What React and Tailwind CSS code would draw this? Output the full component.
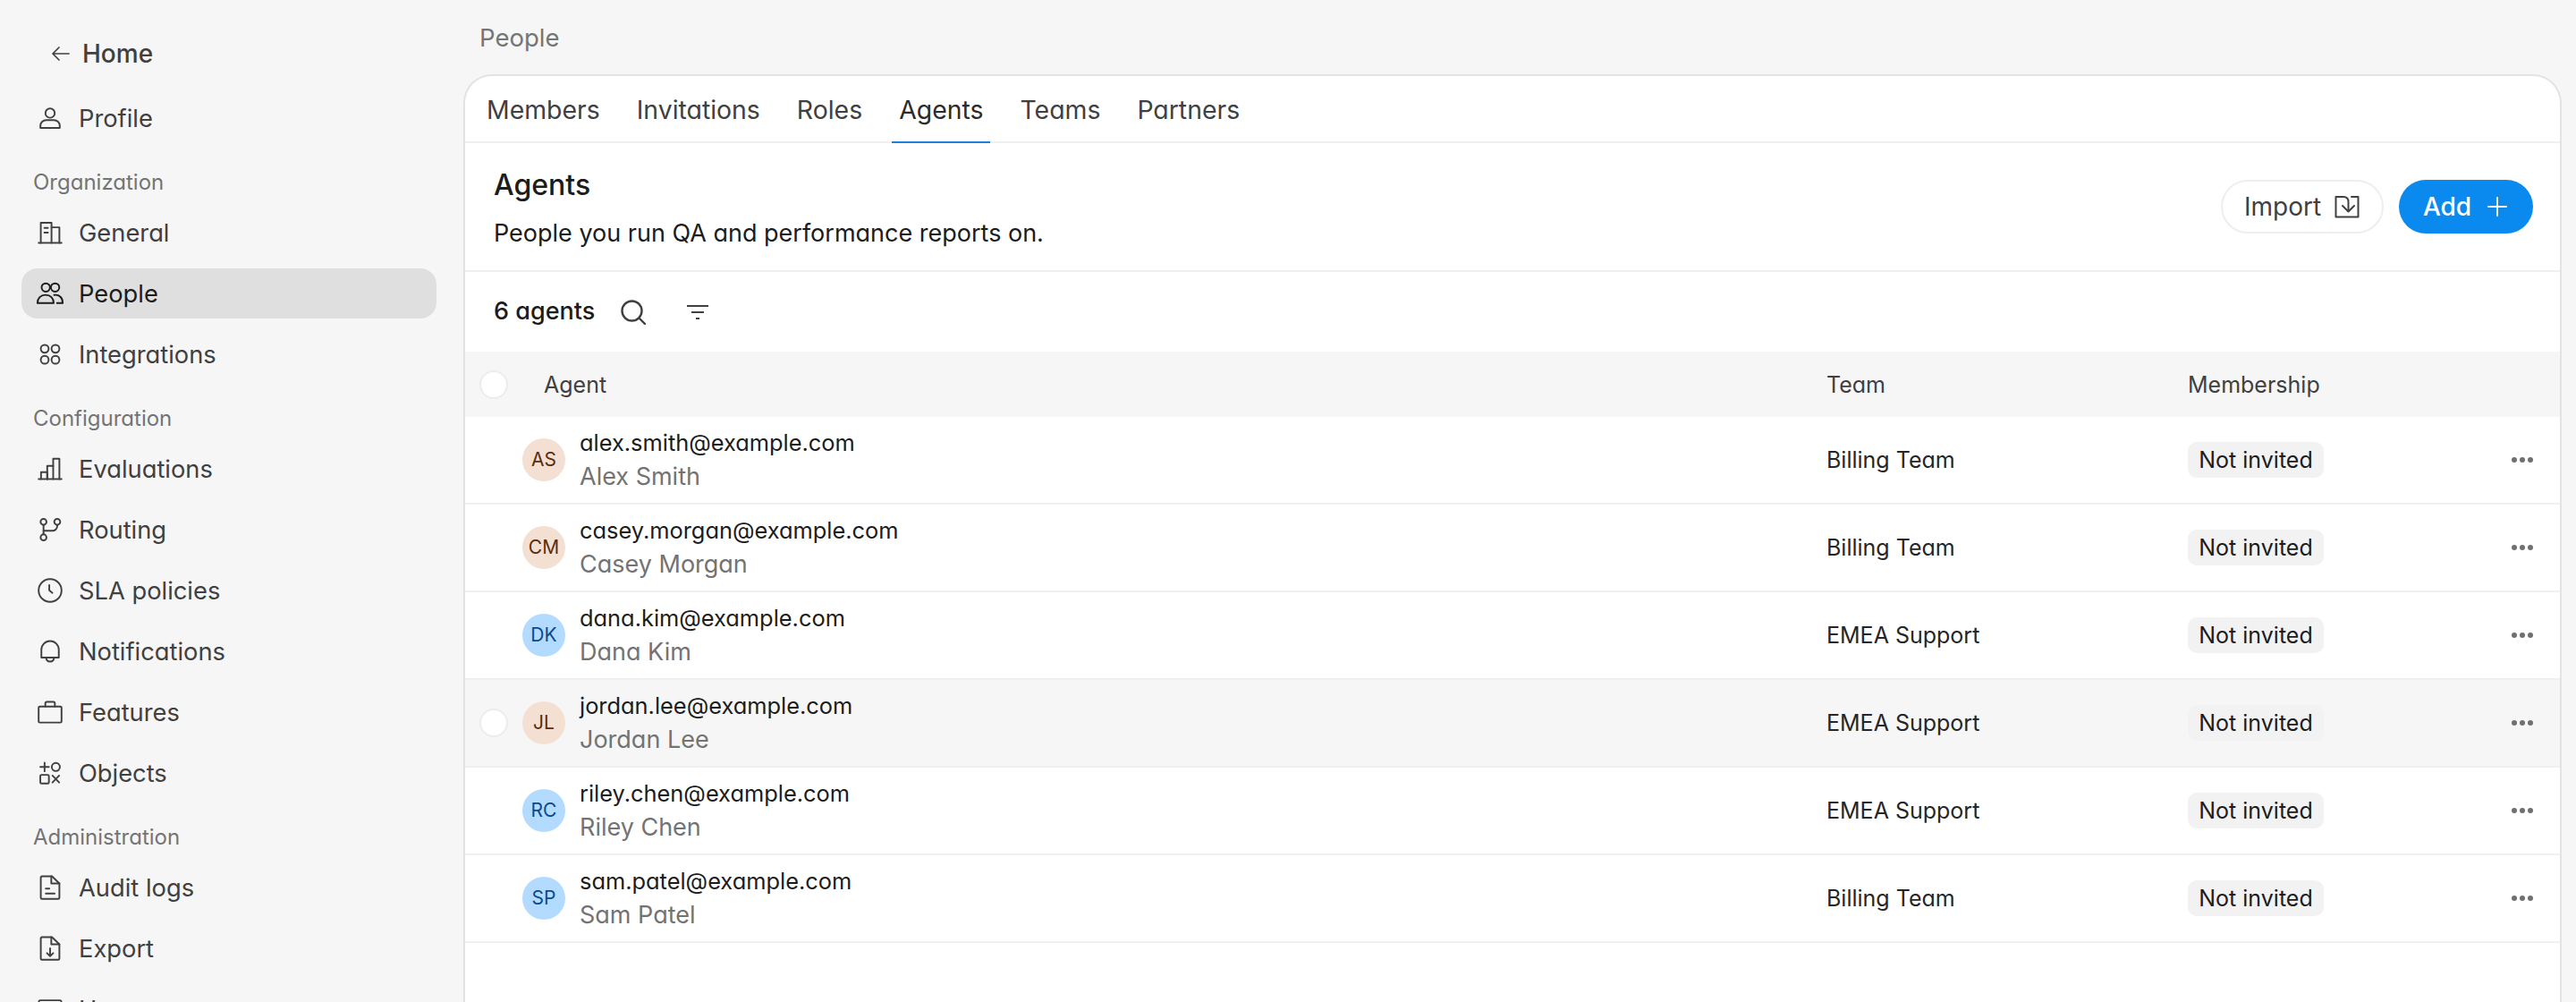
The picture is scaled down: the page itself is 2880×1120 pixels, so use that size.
import React from "react";

const S = ({ children, size = 32, w = 1.45, vb = 24 }) => (
  <svg width={size} height={size} viewBox={`0 0 ${vb} ${vb}`} fill="none" stroke="currentColor" strokeWidth={w} strokeLinecap="round" strokeLinejoin="round" className="shrink-0">{children}</svg>
);

const icons = {
  profile: <S><circle cx="12" cy="7.8" r="3.9" /><path d="M3.9 20.2v-1.8c0-2.7 2.2-4.7 4.9-4.7h6.4c2.7 0 4.9 2 4.9 4.7v1.800z" /></S>,
  general: <S><path d="M1.8 20.6h20.4" strokeLinecap="butt" /><path d="M4.2 20.6V3.8h9v16.8" /><path d="M13.2 7.6h6.6v13" /><path d="M7.2 8h3M7.2 12h3" /></S>,
  people: <S><circle cx="8.4" cy="7" r="3.5" /><circle cx="16.2" cy="7" r="3.5" /><path d="M1.4 20c0-4 2.8-6.8 6.8-6.8s6.800 2.800 6.800 6.800z" /><path d="M15.4 13.300c4.400-.6 7.200 2.400 7.200 6.700h-4.800" /></S>,
  integrations: <S><circle cx="7.5" cy="7.4" r="3.3" /><circle cx="16.5" cy="7.4" r="3.3" /><circle cx="7.5" cy="16.6" r="3.3" /><circle cx="16.5" cy="16.6" r="3.3" /></S>,
  evaluations: <S><path d="M1.8 20.6h20.4" strokeLinecap="butt" /><path d="M4.4 20.6v-5.8h5.2v5.8" /><path d="M9.6 20.6V9.6h5v11" /><path d="M14.6 9.6V3.6h5.2v17" /></S>,
  routing: <S><circle cx="6.5" cy="5.5" r="2.5" /><circle cx="18" cy="5.5" r="2.5" /><circle cx="6.5" cy="18.5" r="2.5" /><path d="M6.5 8v8" /><path d="M6.5 13h7.500a4 4 0 0 0 4-4V8" /></S>,
  sla: <S><circle cx="12" cy="12" r="9.6" /><path d="M11.3 7.5v4.3l2.6 2.2" /></S>,
  notifications: <S><path d="M4.7 17.3v-6.6a7.3 7.3 0 0 1 14.6 0v6.6z" /><path d="M8.6 17.3c.3 2 1.6 3.3 3.4 3.3s3.1-1.3 3.4-3.3" /></S>,
  features: <S><rect x="2.4" y="7.3" width="19.2" height="13.4" rx="1" /><path d="M8 7.3V4.6c0-.7.5-1.2 1.2-1.2h5.6c.7 0 1.2.5 1.2 1.2v2.7" /></S>,
  objects: <S><path d="M7.4 3.4v7.2M3.8 7h7.2" /><circle cx="16.8" cy="7" r="3.4" /><rect x="3.8" y="13.6" width="7.2" height="7.2" rx="1" /><path d="M14 14.2l5.6 5.8M19.6 14.2 14 20" /></S>,
  audit: <S><path d="M5 2.6h8.6L19.8 8.6v12a1 1 0 0 1-1 1H5.2a1 1 0 0 1-1-1V3.4z" /><path d="M13 2.6v6h6.8" /><path d="M8.4 13h3M8.4 17h7.4" /></S>,
  export: <S><path d="M5 2.6h8.6L19.8 8.6v12a1 1 0 0 1-1 1H5.2a1 1 0 0 1-1-1V3.4z" /><path d="M13 2.6v6h6.8" /><path d="M12 12v6.5M9.4 16l2.6 2.6 2.6-2.6" /></S>,
  users: <S><rect x="2.6" y="4.6" width="18.8" height="15" rx="1.2" /><path d="M2.6 7.6h18.8" strokeWidth="3" /></S>,
};

const Item = ({ icon, label, active }) => (
  <div className={`flex h-14 items-center gap-4 rounded-[18px] pl-4 text-[27.3px] ${active ? "bg-[#dfdfdf] text-[#1c1c1c]" : "text-[#404040]"}`}>
    {icons[icon]}
    <span className="pt-[2px]">{label}</span>
  </div>
);

const Label = ({ children }) => (
  <div className="mb-3 mt-7 h-8 pl-[13px] text-[24px] leading-8 text-[#747474]">{children}</div>
);

const rows = [
  ["AS", "alex.smith@example.com", "Alex Smith", "Billing Team", false],
  ["CM", "casey.morgan@example.com", "Casey Morgan", "Billing Team", false],
  ["DK", "dana.kim@example.com", "Dana Kim", "EMEA Support", true],
  ["JL", "jordan.lee@example.com", "Jordan Lee", "EMEA Support", false],
  ["RC", "riley.chen@example.com", "Riley Chen", "EMEA Support", true],
  ["SP", "sam.patel@example.com", "Sam Patel", "Billing Team", true],
];

const Row = ({ initials, email, name, team, blue, hover }) => (
  <div className={`flex h-[98px] items-center border-b-2 border-[#f0f0f0] ${hover ? "bg-[#f6f6f6]" : "bg-white"}`}>
    <div className="flex w-[64px] justify-center">
      {hover && <div className="h-8 w-8 rounded-full border-2 border-[#ececec] bg-white" />}
    </div>
    <div className={`flex h-12 w-12 items-center justify-center rounded-full text-[21px] ${blue ? "bg-[#b3dbff] text-[#0b4a8a]" : "bg-[#f3e0d2] text-[#5c2c0c]"}`}>{initials}</div>
    <div className="ml-4 flex w-[1394px] flex-col">
      <span className="text-[25.4px] leading-[38px] text-[#1c1c1c]">{email}</span>
      <span className="text-[27px] leading-[38px] text-[#737373]">{name}</span>
    </div>
    <div className="w-[404px] pt-[1px] text-[25px] text-[#262626]">{team}</div>
    <div className="flex h-10 w-[152px] items-center justify-center rounded-[10px] bg-[#f2f2f2] pt-[1px] text-[25px] text-[#1c1c1c]">Not invited</div>
    <div className="ml-[210px] flex gap-[3px]">
      <span className="h-[6px] w-[6px] rounded-full bg-[#707070]" />
      <span className="h-[6px] w-[6px] rounded-full bg-[#707070]" />
      <span className="h-[6px] w-[6px] rounded-full bg-[#707070]" />
    </div>
  </div>
);

export default function App() {
  return (
    <div className="flex h-[1120px] w-[2880px] overflow-hidden bg-[#f6f6f6] [font-family:Inter,'Noto_Sans',sans-serif] [font-feature-settings:'cv11']">
      <aside className="w-[518px] shrink-0 pl-6 pr-[30px] pt-8">
        <div className="flex h-14 items-center gap-[13px] pl-[33px] text-[28px] font-medium text-[#404040]">
          <svg width="22" height="20" viewBox="0 0 22 20" fill="none" stroke="currentColor" strokeWidth="1.7" strokeLinecap="round" strokeLinejoin="round"><path d="M20 10H2M9 3l-7 7 7 7" /></svg>
          <span>Home</span>
        </div>
        <div className="mt-4"><Item icon="profile" label="Profile" /></div>
        <Label>Organization</Label>
        <div className="flex flex-col gap-3">
          <Item icon="general" label="General" />
          <Item icon="people" label="People" active />
          <Item icon="integrations" label="Integrations" />
        </div>
        <Label>Configuration</Label>
        <div className="flex flex-col gap-3">
          <Item icon="evaluations" label="Evaluations" />
          <Item icon="routing" label="Routing" />
          <Item icon="sla" label="SLA policies" />
          <Item icon="notifications" label="Notifications" />
          <Item icon="features" label="Features" />
          <Item icon="objects" label="Objects" />
        </div>
        <Label>Administration</Label>
        <div className="flex flex-col gap-3">
          <Item icon="audit" label="Audit logs" />
          <Item icon="export" label="Export" />
          <Item icon="users" label="Users" />
        </div>
      </aside>

      <main className="flex w-[2346px] shrink-0 flex-col">
        <div className="flex h-[83px] items-center pl-[18px] pt-[2px] text-[27.5px] text-[#757575]">People</div>
        <div className="flex-1 rounded-t-[32px] border-x-2 border-t-2 border-[#e3e3e3] bg-white">
          <div className="flex h-[75px] items-end gap-[41px] border-b-2 border-[#f0f0f0] pl-6 text-[28.4px] text-[#404040]">
            {["Members", "Invitations", "Roles", "Agents", "Teams", "Partners"].map((t) => (
              <div key={t} className={`relative flex h-full items-center pt-[4px] ${t === "Agents" ? "text-[#2b2b2b]" : ""}`}>
                {t}
                {t === "Agents" && <span className="absolute -bottom-[2px] -left-2 -right-2 h-[2px] bg-[#1a82dc]" />}
              </div>
            ))}
          </div>
          <div className="flex h-[144px] items-center justify-between border-b-2 border-[#f0f0f0] pl-8 pr-[30px]">
            <div className="flex flex-col pt-[3px]">
              <span className="text-[32px] font-medium leading-[44px] text-[#1c1c1c]">Agents</span>
              <span className="mt-3 text-[27px] leading-[40px] text-[#1c1c1c]">People you run QA and performance reports on.</span>
            </div>
            <div className="flex items-center gap-[17px]">
              <div className="flex h-[60px] w-[182px] items-center justify-center gap-[14px] rounded-full border-2 border-[#eeeeee] bg-white text-[28px] text-[#404040]">
                <span>Import</span>
                <svg width="30" height="28" viewBox="0 0 30 28" fill="none" stroke="currentColor" strokeWidth="2" strokeLinecap="round" strokeLinejoin="round"><path d="M9 3H2.500v22.500h25V3H20" /><path d="M9 3h2c3.500 0 5.500 2 5.500 5.500V19" /><path d="M10 13l6.500 6.500L23 13" /></svg>
              </div>
              <div className="flex h-[60px] w-[150px] items-center justify-center gap-[18px] rounded-full bg-[#0a8aef] pr-[2px] text-[28px] font-medium text-white">
                <span>Add</span>
                <svg width="22" height="22" viewBox="0 0 22 22" fill="none" stroke="currentColor" strokeWidth="2" strokeLinecap="round"><path d="M11 1v20M1 11h20" /></svg>
              </div>
            </div>
          </div>
          <div className="flex h-[89px] items-center pl-8 text-[#404040]">
            <span className="w-[111px] whitespace-nowrap text-[27px] font-medium text-[#1c1c1c]">6 agents</span>
            <svg className="ml-[30px]" width="30" height="30" viewBox="0 0 30 30" fill="none" stroke="currentColor" strokeWidth="2.4" strokeLinecap="round"><circle cx="13.500" cy="13.500" r="11" /><path d="M21.500 21.500 28 28" /></svg>
            <svg className="ml-[44px]" width="26" height="20" viewBox="0 0 26 20" fill="none" stroke="currentColor" strokeWidth="2.2"><path d="M1 3h24M6 10h14M11 17h4" /></svg>
          </div>
          <div className="flex h-[73px] items-center bg-[#f6f6f6] text-[25px] text-[#404040]">
            <div className="flex w-[64px] justify-center"><div className="h-8 w-8 rounded-full border-2 border-[#ececec] bg-white" /></div>
            <div className="ml-6 w-[1434px] pt-[2px]">Agent</div>
            <div className="w-[404px] pt-[2px]">Team</div>
            <div className="pt-[2px]">Membership</div>
          </div>
          {rows.map((r, i) => (
            <Row key={r[0]} initials={r[0]} email={r[1]} name={r[2]} team={r[3]} blue={r[4]} hover={i === 3} />
          ))}
        </div>
      </main>
    </div>
  );
}
